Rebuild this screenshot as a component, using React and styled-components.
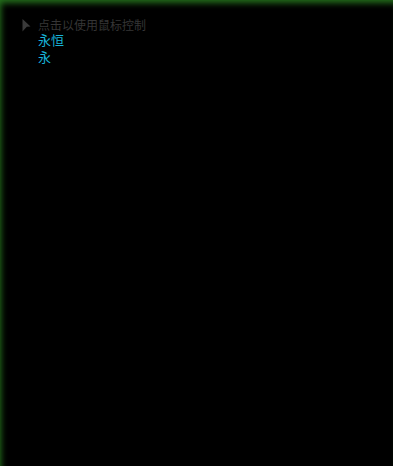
import React from "react";
import styled, { createGlobalStyle } from "styled-components";

const Global = createGlobalStyle`
  html, body { margin: 0; padding: 0; background: #000; }
  #root { height: 466px; }
`;

const Screen = styled.div`
  width: 393px;
  height: 466px;
  box-sizing: border-box;
  background: #000;
  position: relative;
  overflow: hidden;
  box-shadow: inset 3px 5px 6px -2px rgba(45, 140, 35, 0.8);
  padding: 19px 0 0 22px;
  font-family: "Noto Sans CJK SC", "Noto Sans", sans-serif;
`;

const Hint = styled.div`
  display: flex;
  align-items: center;
  gap: 7px;
  color: #353535;
  font-size: 12px;
  line-height: 12px;
  height: 12px;
`;

const Arrow = styled.svg`
  width: 9px;
  height: 13px;
  flex: none;
`;

const List = styled.div`
  display: flex;
  flex-direction: column;
  padding-left: 16px;
`;

const Item = styled.div`
  color: #17b3d9;
  font-size: 13px;
  line-height: 17px;
  height: 17px;
`;

export default function App() {
  return (
    <>
      <Global />
      <Screen>
        <Hint>
          <Arrow viewBox="0 0 9 13">
            <path d="M0.5 0 L8.5 7.5 L4.8 7.8 L0.5 12.5 Z" fill="#3a3a3a" />
          </Arrow>
          <span>点击以使用鼠标控制</span>
        </Hint>
        <List>
          <Item>永恒</Item>
          <Item>永</Item>
        </List>
      </Screen>
    </>
  );
}
